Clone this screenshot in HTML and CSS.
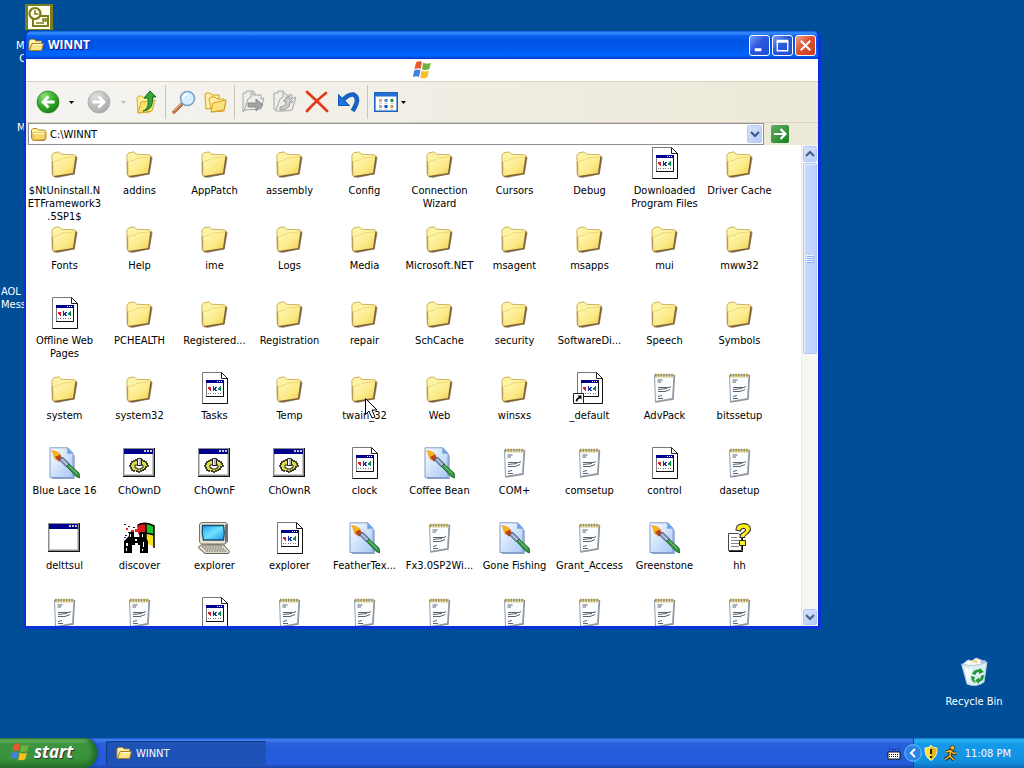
FILE: index.html
```html
<!DOCTYPE html>
<html lang="en">
<head>
<meta charset="utf-8">
<title>WINNT</title>
<link rel="stylesheet" href="styles.css">
</head>
<body>
<svg class="defs" aria-hidden="true">
  <defs>
    <linearGradient id="gFolder" x1="0" y1="0" x2="1" y2="1"><stop offset="0" stop-color="#fffac0"/><stop offset=".6" stop-color="#fbe984"/><stop offset="1" stop-color="#eccb50"/></linearGradient>
    <linearGradient id="gPage" x1="0" y1="0" x2="1" y2="1"><stop offset="0" stop-color="#fdfeff"/><stop offset="1" stop-color="#a5c8f5"/></linearGradient>
    <radialGradient id="gGreen" cx=".35" cy=".25" r=".9"><stop offset="0" stop-color="#8ede76"/><stop offset=".5" stop-color="#35a92c"/><stop offset="1" stop-color="#12720f"/></radialGradient>
    <radialGradient id="gGrey" cx=".35" cy=".25" r=".9"><stop offset="0" stop-color="#dedede"/><stop offset="1" stop-color="#a2a2a2"/></radialGradient>
    <linearGradient id="gScreen" x1="0" y1="0" x2="1" y2="1"><stop offset="0" stop-color="#1aa0f0"/><stop offset=".5" stop-color="#6fe0ff"/><stop offset="1" stop-color="#1c9be8"/></linearGradient>
    <symbol id="folder" viewBox="0.500 0 33 33">
      <path d="M8 30.500 26 27.500 30 10l1 1-3 17-18 4z" fill="#6b5a52" opacity=".65"/>
      <path d="M4.500 8.500 6.500 6 12 5 14.500 7.500 28 8 29.500 9.500 26.500 27.500 6.500 30.500 5 28z" fill="#fdf3a4" stroke="#cbb05c"/>
      <path d="M5.500 15.500 13.500 13 15 11.500 29 10 26.500 27 7 30z" fill="url(#gFolder)" stroke="#e5c34e" stroke-width=".6"/>
      <path d="M29.500 10 27 27.500 7 30.600" fill="none" stroke="#7d5e35" stroke-width="1.500"/>
      <path d="M5 15v13l1.500 2.500" fill="none" stroke="#b1935b"/>
    </symbol>
    <symbol id="folderopen" viewBox="0 0 16 16">
      <path d="M1 13 1 4 2.500 2.500h4L8 4h5.500v3" fill="#fff3a2" stroke="#b98c2c"/>
      <path d="M1.500 13.500 4 6.500h11.500L13.500 13.500z" fill="#fbe58a" stroke="#a87d24"/>
      <path d="M5 7.500h9" stroke="#fffde0"/>
    </symbol>
    <symbol id="settings" viewBox="0 0 32 32">
      <path d="M4.500 .5h18.500l6.500 6V31.500H4.500z" fill="#fff" stroke="#777"/>
      <path d="M29.500 6v25.500H4.500" fill="none" stroke="#111"/>
      <path d="M23.500 .5v6h6z" fill="#fff" stroke="#222"/>
      <path d="M8.500 8.500h17v16h-17z" fill="#fff" stroke="#808080"/>
      <path d="M8 8h18v3H8z" fill="#00008a"/><path d="M19 9h1v1h-1zM21 9h1v1h-1zM23 9h1v1h-1z" fill="#fff"/>
      <path d="M25.500 8v16.500H8" fill="none" stroke="#111"/>
      <path d="M11 15h2v4h-1v-1h-1zM10 15h1v2h-1z" fill="#d2202e"/>
      <path d="M15 14h1v2h1v-1h2v1h-1v2h1v1h-2v-1h-1v1h-1z" fill="#1a2ea8"/>
      <path d="M22 14h1v5h-1v-1h-2v-2h1v-1h1z" fill="#0b8f4c"/>
      <path d="M10 21.500h3M15 21.500h3M20 21.500h3" stroke="#777" stroke-dasharray="1 1"/>
    </symbol>
    <symbol id="notepad" viewBox="0 0 32 32">
      <path d="M7.500 28.500 8 30 25 27 26.500 3" fill="none" stroke="#666" stroke-width="1.500" opacity=".7"/>
      <path d="M6.500 3h19.500l-1.500 23.500L7.500 29.500z" fill="#fcfdff" stroke="#8494a5" stroke-width=".9"/>
      <path d="M7 3.300h19" stroke="#a8913b" stroke-width="3.200" stroke-dasharray="1.500 1.200"/>
      <path d="M7 5.200h18.500" stroke="#e3d9a5"/>
      <path d="M9.500 8h5M9.500 10h3.500M10 15.500h11l2-1M10 17.500l9-1M10 19.500h7l5-2M10 24.500l4-1M10 26.500h5" fill="none" stroke="#46525e" stroke-width=".9"/>
    </symbol>
    <symbol id="paint" viewBox="0 0 32 32">
      <path d="M4 31.500h22V8" fill="none" stroke="#5c7baf" stroke-width="1.500" opacity=".7"/>
      <path d="M2 .8h18l5 5.500V30.500H2z" fill="url(#gPage)" stroke="#7f9ccb"/>
      <path d="M19.500 1v5.500H25z" fill="#5ea4ef" stroke="#8bb0e2"/>
      <path d="M3.500 3.500c3 0 7 1 9.500 5l-5 4.500C5 10 6 7 3.500 3.500z" fill="#f6b31c" stroke="#e09a18" stroke-width=".5"/>
      <path d="m7 10 5-2.500 3 5.500-4.500 1.500z" fill="#b8461a"/>
      <path d="m11.500 13 3-3 7 7-3 3z" fill="#8697bd" stroke="#384875" stroke-width=".8"/>
      <path d="m13.500 12 6 6" stroke="#e6eeff"/>
      <path d="m18.500 19.500 2.500-2.500 10 9 1 5-4-1.500z" fill="#319443" stroke="#185a2a" stroke-width=".8"/>
      <path d="m20.500 18.500 9 8.500" stroke="#8bd183"/>
    </symbol>
    <symbol id="appwin" viewBox="0 0 32 32">
      <path d="M0 1h32v29H0z" fill="#111"/><path d="M0 1h31v28H0z" fill="#8c8c8c"/><path d="M1 2h29v26H1z" fill="#c8c8c8"/>
      <path d="M2 7h27v20H2z" fill="#fff"/><path d="M1 2h29v5H1z" fill="#00008c"/>
      <path d="M21 3h2v2h-2zM24 3h2v2h-2zM27 3h2v2h-2z" fill="#c8c8c8"/>
    </symbol>
    <symbol id="gearwin" viewBox="0 0 32 32">
      <use href="#appwin"/>
      <path d="M8 15h2v-1h2v-1h8v1h2v1h2v2h1v2h-2v2h-1v2h-2v1h-3v1h-3v-1h-3v-1h-2v-2H8v-2H7v-2h1z" fill="#dede4c" stroke="#111" stroke-width="1.600" stroke-dasharray="2 1"/>
      <path d="M12 18h8v3h-2v1h-4v-1h-2z" fill="#fff" stroke="#222"/>
      <path d="M14.500 11.500h4v7h-4z" fill="#b8b8b8" stroke="#222"/><path d="M15.500 12v6" stroke="#fff"/>
    </symbol>
    <symbol id="binoculars" viewBox="0 0 32 32">
      <path d="M14 3q4-3 9-2v10q-4-1-8 1z" fill="#e01818"/><path d="M23 1q5 .5 8 3v9q-4-2-8-2z" fill="#1cc42a"/>
      <path d="M23 12q5 0 8 2v11q-4-3-8-3z" fill="#f2e31e"/><path d="M16 12q3-1 7-.5V20h-7z" fill="#2446d8"/>
      <path d="M15 3q8-4 16 1v22M23 1v19M16 12q8-2 15 1" fill="none" stroke="#000" stroke-width="1.500"/>
      <path d="M1 2h2v1H1zM5 4h2v1H5zM10 5h2v1h-2zM2 13h2v1H2zM5 10h2v1H5z" fill="#111"/>
      <path d="M3 6h2v2H3zM8 8h3v2H8zM12 7h3v3h-3z" fill="#e02828"/><path d="M1 15h2v1H1z" fill="#2446d8"/>
      <path d="M6 10h5v5h6v-5h5v5l3 4v12h-8v-8h-2v-2h-3v2H9v8H1V19l5-5z" fill="#000"/>
      <path d="M7 12h1v3H7zM19 12h1v3h-1zM3 21h2v3H3zM3 26h1v3H3zM20 20h1v5h-1zM19 27h1v2h-1zM12 17h2v2h-2z" fill="#fff"/>
    </symbol>
    <symbol id="computer" viewBox="0 0 32 32">
      <path d="M1.500 2 4 .5h24L29.500 2v18L27 22H3.500l-2-2z" fill="#e6e2cf" stroke="#77756a"/>
      <path d="M27 3 29 2v17l-2 2z" fill="#6e6c66"/>
      <path d="M4.500 3.500h21q1.500 7 0 14.500h-20q-2-7-1-14.500z" fill="url(#gScreen)" stroke="#174d73" stroke-width="1.300"/>
      <path d="M9 22h14l2 3H7z" fill="#9c9a8e"/>
      <path d="m1 24.500 2-1.500h23l5.500 6.500-1 2H7L.5 26z" fill="#dedac8" stroke="#65635a"/>
      <path d="M4 25h20M6 27h20M8 29h21" stroke="#6c6a62" stroke-width="1.100" stroke-dasharray="1.800 .8"/>
    </symbol>
    <symbol id="helpdoc" viewBox="0 0 32 32">
      <path d="M5.500 11.500h10l3 3V28.500H5.500z" fill="#fff" stroke="#444"/><path d="M19.500 15v14.500H6" fill="none" stroke="#000"/>
      <path d="M8 15.500h6M8 18.500h8M8 21.500h8M8 24.500h8" stroke="#888"/>
      <path d="M13 8c-1-8 14.500-8.500 14.500-1 0 5-6 5-6 8.500h-4.500c0-6 5.500-4.500 5.500-7.500 0-2.500-5-2-5 1z" fill="#ffef20" stroke="#333" stroke-width="1.100"/>
      <path d="M16.500 18.500h6v5h-6z" fill="#ffef20" stroke="#222"/>
    </symbol>
    <symbol id="shortcut" viewBox="0 0 32 32">
      <use href="#settings"/>
      <path d="M.5 21.500h10v10H.5z" fill="#fff" stroke="#222"/>
      <path d="M3.500 29.500q0-3 3.500-4" fill="none" stroke="#000" stroke-width="1.600"/><path d="M4.500 23.500H8.500V27.500z"/>
    </symbol>
    <symbol id="flag" viewBox="0 0 20 20">
      <path d="M4 2.500Q7 .5 10 2L8.700 8.800Q5.500 7.500 2.500 9.300z" fill="#e9572b"/>
      <path d="M11.200 2.700Q15 4.500 19 2.700L17.300 9Q13.500 11 10 9.200z" fill="#6db33a"/>
      <path d="M2.200 10.500Q5.500 8.800 8.500 10.200L7 17Q4 15.500.8 17.200z" fill="#4182dc"/>
      <path d="M9.700 10.500q3.500 1.700 7.300.200L15.300 17.300q-3.500 2-7 .2z" fill="#f6be27"/>
    </symbol>
  </defs>
</svg>

<div class="screen">
  <main class="desktop">
    <div class="shortcut outlook">
      <svg class="outlook-icon" viewBox="0 0 28 26" aria-hidden="true"><path d="M0 0h28v26H0z" fill="#7d7c1e"/><path d="M3 2h22v23H3z" fill="#fffff0"/><path d="M8 12h15v10H8z" fill="#fffff0" stroke="#7d7c1e" stroke-width="2"/><circle cx="10" cy="9.500" r="5.500" fill="#fffff0" stroke="#7d7c1e" stroke-width="2.200"/><path d="M10 6v4h3.500M18 15h3v2h-3zM11 19h8" fill="none" stroke="#7d7c1e" stroke-width="1.600"/></svg>
    </div>
    <span class="desk-label first">M<br>&nbsp;C</span>
    <span class="desk-label second">M</span>
    <span class="desk-label third">AOL<br>Mess</span>

    <a class="recycle" href="#">
      <svg viewBox="0 0 32 32" aria-hidden="true"><path d="m5 7 5-4 4 1 4-3 5 2 5 3-3 8H8z" fill="#f9f7ee" stroke="#c6cfe2"/><path d="m14 5 4-3 2 4z" fill="#f1d287"/><path d="m22 4 5-1 2 4-5 2z" fill="#b3c5f5"/><path d="M3.500 7q12 4 25.500-2l-3 20q-8 6-17 2z" fill="#dceef2" stroke="#a9c9dc"/><path d="m8 11 3 14M13 11l-2 8" stroke="#fff" stroke-width="3" opacity=".8"/><path d="M14 17q2-5 7-4.500l1-1.500 4 4-5 2v-2q-3 0-3.500 3zM26 18q0 6-5 7v2l-4-3.500 4-3v2q2-1 2-4zM13 19l4 1-1 3 2 3q-4-1-4.500-4z" fill="#1f9a34"/></svg>
      <span>Recycle Bin</span>
    </a>

    <section class="window" aria-label="WINNT">
      <header class="titlebar">
        <svg class="small-icon" aria-hidden="true"><use href="#folderopen"/></svg>
        <h1>WINNT</h1>
        <div class="caption-buttons">
          <button class="cap" aria-label="Minimize"><svg viewBox="0 0 20 20"><path d="M5 13h7v3H5z" fill="#fff"/></svg></button>
          <button class="cap" aria-label="Maximize"><svg viewBox="0 0 20 20"><path d="M4.500 5.500h11v10h-11z" fill="none" stroke="#fff" stroke-width="1.400"/><path d="M4 4h12v3H4z" fill="#fff"/></svg></button>
          <button class="cap close" aria-label="Close"><svg viewBox="0 0 20 20"><path d="m5 5 10 10M15 5 5 15" stroke="#fff" stroke-width="2.200"/></svg></button>
        </div>
      </header>
      <div class="menubar"><svg class="throbber" aria-hidden="true"><use href="#flag"/></svg></div>
      <div class="toolbar" role="toolbar">
        <button class="tool back" aria-label="Back"><svg viewBox="0 0 24 24"><circle cx="12" cy="12" r="11" fill="url(#gGreen)" stroke="#348a2e" stroke-width=".8"/><path d="M18.500 12H7m5.500-5.500L7 12l5.500 5.500" fill="none" stroke="#fff" stroke-width="2.800"/></svg></button>
        <button class="drop" aria-label="Back history"><svg viewBox="0 0 5 3"><path d="M0 0h5L2.500 3z"/></svg></button>
        <button class="tool forward" aria-label="Forward"><svg viewBox="0 0 24 24"><circle cx="12" cy="12" r="11" fill="url(#gGrey)" stroke="#aaa" stroke-width=".8"/><path d="M5.500 12H17m-5.500-5.500L17 12l-5.500 5.500" fill="none" stroke="#fff" stroke-width="2.800"/></svg></button>
        <button class="drop off" aria-label="Forward history"><svg viewBox="0 0 5 3"><path d="M0 0h5L2.500 3z" fill="#bbb"/></svg></button>
        <button class="tool up" aria-label="Up"><svg viewBox="0 0 24 24"><path d="m2 8 2-2h3l2 2h8l-2 14-12 1z" fill="#fff3a0" stroke="#d0a92c"/><path d="m3 23 3-11 14-2-3 11z" fill="#fae46f" stroke="#d0a92c"/><path d="M8 21c5-2 5.500-6 5-13H9l6-7 6 6h-3.500c.5 8-1.500 13-9.500 14z" fill="#37a537" stroke="#136d1c"/></svg></button>
        <span class="sep"></span>
        <button class="tool search" aria-label="Search"><svg viewBox="0 0 24 24"><path d="m2 22 8-8" stroke="#b96f4c" stroke-width="3.500" stroke-linecap="round"/><path d="m2 21 7-7" stroke="#f0b797"/><circle cx="15.500" cy="8.500" r="7" fill="#d6f0fd" stroke="#7b9fca" stroke-width="1.600"/><path d="M11 8q1-4 5-4" fill="none" stroke="#fff" stroke-width="2"/></svg></button>
        <button class="tool folders" aria-label="Folders"><svg viewBox="0 0 24 24"><path d="m1 5 1-2h4l2 2h7v4l-2 9-11 1z" fill="#fff0a0" stroke="#d79b2a"/><path d="m5 9 2-2h4l2 2h7v3l2-1-2 10-12 1z" fill="#fff0a0" stroke="#d79b2a"/><path d="m7 22 2-9 13-3-2 10z" fill="#fbe27b" stroke="#d79b2a"/></svg></button>
        <span class="sep"></span>
        <button class="tool move" aria-label="Move to"><svg viewBox="0 0 24 24"><path d="M2 3h3V1h7l3 4h5v4l3-1-3 11-16 1-2 2z" fill="#ededeb" stroke="#a5a5a5"/><path d="m3 21 4-12 3-2V2M12 1v4h3" fill="none" stroke="#a5a5a5"/><path d="M7 13h8V9l7 6-7 6v-4H7z" fill="#a2a2a2" stroke="#8c8c8c"/></svg></button>
        <button class="tool copy" aria-label="Copy to"><svg viewBox="0 0 24 24"><path d="M1 3h4V1h5l3 4h6v4l4-2-4 13-7 1H3L1 19z" fill="#ededeb" stroke="#a5a5a5"/><path d="m3 20 4-11 3-2V2M12 8l4-2 3 3" fill="none" stroke="#a5a5a5"/><path d="M7 17q6 0 6-6h-3l5-4 5 5h-3q0 8-10 8z" fill="#cdcdcd" stroke="#999"/></svg></button>
        <button class="tool delete" aria-label="Delete"><svg viewBox="0 0 24 24"><path d="M2 2q9 8 20 19M21 3Q12 10 2 21" fill="none" stroke="#e23b18" stroke-width="2.800" stroke-linecap="round"/></svg></button>
        <button class="tool undo" aria-label="Undo"><svg viewBox="0 0 24 24"><path d="M5 11Q11 4 16.500 4.500 24 8 15.500 21" fill="none" stroke="#1763c4" stroke-width="4.600"/><path d="M1.500 4.500v11h11z" fill="#1e74dc" stroke="#1258b4"/></svg></button>
        <span class="sep"></span>
        <button class="tool views" aria-label="Views"><svg viewBox="0 0 24 20"><path d="M.8.800h22.400v18.400H.8z" fill="#fff" stroke="#1c60bc" stroke-width="1.600"/><path d="M1 1h22v3.500H1z" fill="#236fd4"/><path d="M5 7h3v3H5z" fill="#c4ac97"/><path d="M10.500 7h3v3h-3z" fill="#5189ba"/><path d="M16.500 7h3v3h-3z" fill="#278c4b"/><path d="M5 13h3v3H5z" fill="#a6aba5"/><path d="M10.500 13h3v3h-3z" fill="#0f51bc"/><path d="M16.500 13h3v3h-3z" fill="#c39d4a"/><path d="M5 11.500h3M10.500 11.500h3M16.500 11.500h3M5 17.500h3M10.500 17.500h3M16.500 17.500h3" stroke="#bbb" stroke-width=".8"/></svg></button>
        <button class="drop" aria-label="View options"><svg viewBox="0 0 5 3"><path d="M0 0h5L2.500 3z"/></svg></button>
      </div>
      <form class="addressbar">
        <div class="address">
          <svg class="small-icon" viewBox="0 0 16 16" aria-hidden="true"><path d="M.5 12V4L2 2.500h4L7.500 4h6l1.500 2v7L13 14.500H2z" fill="#fff09a" stroke="#b18328"/><path d="M2 14V7h12v6.500z" fill="#f7d768" stroke="#cfa33a"/><path d="M2.500 7.500h11" stroke="#fffbd0"/></svg>
          <input type="text" value="C:\WINNT" aria-label="Address">
          <button class="combo" type="button" aria-label="Show addresses"><svg viewBox="0 0 10 8"><path d="m1 2 4 4 4-4" fill="none" stroke="#3f5a8c" stroke-width="2.200"/></svg></button>
        </div>
        <button class="go" type="button" aria-label="Go"><svg viewBox="0 0 18 18"><path d="M3 9h11M9.500 4l5 5-5 5" fill="none" stroke="#fff" stroke-width="2.200"/></svg></button>
      </form>
      <div class="client">
        <ul class="files">
          <li><a href="#"><svg><use href="#folder"/></svg>$NtUninstall.N<br>ETFramework3<br>.5SP1$</a></li>
          <li><a href="#"><svg><use href="#folder"/></svg>addins</a></li>
          <li><a href="#"><svg><use href="#folder"/></svg>AppPatch</a></li>
          <li><a href="#"><svg><use href="#folder"/></svg>assembly</a></li>
          <li><a href="#"><svg><use href="#folder"/></svg>Config</a></li>
          <li><a href="#"><svg><use href="#folder"/></svg>Connection<br>Wizard</a></li>
          <li><a href="#"><svg><use href="#folder"/></svg>Cursors</a></li>
          <li><a href="#"><svg><use href="#folder"/></svg>Debug</a></li>
          <li><a href="#"><svg><use href="#settings"/></svg>Downloaded<br>Program Files</a></li>
          <li><a href="#"><svg><use href="#folder"/></svg>Driver Cache</a></li>
          <li><a href="#"><svg><use href="#folder"/></svg>Fonts</a></li>
          <li><a href="#"><svg><use href="#folder"/></svg>Help</a></li>
          <li><a href="#"><svg><use href="#folder"/></svg>ime</a></li>
          <li><a href="#"><svg><use href="#folder"/></svg>Logs</a></li>
          <li><a href="#"><svg><use href="#folder"/></svg>Media</a></li>
          <li><a href="#"><svg><use href="#folder"/></svg>Microsoft.NET</a></li>
          <li><a href="#"><svg><use href="#folder"/></svg>msagent</a></li>
          <li><a href="#"><svg><use href="#folder"/></svg>msapps</a></li>
          <li><a href="#"><svg><use href="#folder"/></svg>mui</a></li>
          <li><a href="#"><svg><use href="#folder"/></svg>mww32</a></li>
          <li><a href="#"><svg><use href="#settings"/></svg>Offline Web<br>Pages</a></li>
          <li><a href="#"><svg><use href="#folder"/></svg>PCHEALTH</a></li>
          <li><a href="#"><svg><use href="#folder"/></svg>Registered...</a></li>
          <li><a href="#"><svg><use href="#folder"/></svg>Registration</a></li>
          <li><a href="#"><svg><use href="#folder"/></svg>repair</a></li>
          <li><a href="#"><svg><use href="#folder"/></svg>SchCache</a></li>
          <li><a href="#"><svg><use href="#folder"/></svg>security</a></li>
          <li><a href="#"><svg><use href="#folder"/></svg>SoftwareDi...</a></li>
          <li><a href="#"><svg><use href="#folder"/></svg>Speech</a></li>
          <li><a href="#"><svg><use href="#folder"/></svg>Symbols</a></li>
          <li><a href="#"><svg><use href="#folder"/></svg>system</a></li>
          <li><a href="#"><svg><use href="#folder"/></svg>system32</a></li>
          <li><a href="#"><svg><use href="#settings"/></svg>Tasks</a></li>
          <li><a href="#"><svg><use href="#folder"/></svg>Temp</a></li>
          <li><a href="#"><svg><use href="#folder"/></svg>twain_32</a></li>
          <li><a href="#"><svg><use href="#folder"/></svg>Web</a></li>
          <li><a href="#"><svg><use href="#folder"/></svg>winsxs</a></li>
          <li><a href="#"><svg><use href="#shortcut"/></svg>_default</a></li>
          <li><a href="#"><svg><use href="#notepad"/></svg>AdvPack</a></li>
          <li><a href="#"><svg><use href="#notepad"/></svg>bitssetup</a></li>
          <li><a href="#"><svg><use href="#paint"/></svg>Blue Lace 16</a></li>
          <li><a href="#"><svg><use href="#gearwin"/></svg>ChOwnD</a></li>
          <li><a href="#"><svg><use href="#gearwin"/></svg>ChOwnF</a></li>
          <li><a href="#"><svg><use href="#gearwin"/></svg>ChOwnR</a></li>
          <li><a href="#"><svg><use href="#settings"/></svg>clock</a></li>
          <li><a href="#"><svg><use href="#paint"/></svg>Coffee Bean</a></li>
          <li><a href="#"><svg><use href="#notepad"/></svg>COM+</a></li>
          <li><a href="#"><svg><use href="#notepad"/></svg>comsetup</a></li>
          <li><a href="#"><svg><use href="#settings"/></svg>control</a></li>
          <li><a href="#"><svg><use href="#notepad"/></svg>dasetup</a></li>
          <li><a href="#"><svg><use href="#appwin"/></svg>delttsul</a></li>
          <li><a href="#"><svg><use href="#binoculars"/></svg>discover</a></li>
          <li><a href="#"><svg><use href="#computer"/></svg>explorer</a></li>
          <li><a href="#"><svg><use href="#settings"/></svg>explorer</a></li>
          <li><a href="#"><svg><use href="#paint"/></svg>FeatherTex...</a></li>
          <li><a href="#"><svg><use href="#notepad"/></svg>Fx3.0SP2Wi...</a></li>
          <li><a href="#"><svg><use href="#paint"/></svg>Gone Fishing</a></li>
          <li><a href="#"><svg><use href="#notepad"/></svg>Grant_Access</a></li>
          <li><a href="#"><svg><use href="#paint"/></svg>Greenstone</a></li>
          <li><a href="#"><svg><use href="#helpdoc"/></svg>hh</a></li>
          <li><a href="#" aria-label="File"><svg><use href="#notepad"/></svg></a></li>
          <li><a href="#" aria-label="File"><svg><use href="#notepad"/></svg></a></li>
          <li><a href="#" aria-label="File"><svg><use href="#settings"/></svg></a></li>
          <li><a href="#" aria-label="File"><svg><use href="#notepad"/></svg></a></li>
          <li><a href="#" aria-label="File"><svg><use href="#notepad"/></svg></a></li>
          <li><a href="#" aria-label="File"><svg><use href="#notepad"/></svg></a></li>
          <li><a href="#" aria-label="File"><svg><use href="#notepad"/></svg></a></li>
          <li><a href="#" aria-label="File"><svg><use href="#notepad"/></svg></a></li>
          <li><a href="#" aria-label="File"><svg><use href="#notepad"/></svg></a></li>
          <li><a href="#" aria-label="File"><svg><use href="#notepad"/></svg></a></li>
        </ul>
        <div class="scrollbar">
          <button class="scroll-btn" aria-label="Scroll up"><svg viewBox="0 0 10 8"><path d="m1 6 4-4 4 4" fill="none" stroke="#4d6185" stroke-width="2.200"/></svg></button>
          <div class="track"><div class="thumb"><svg viewBox="0 0 8 8"><path d="M0 .5h7M0 2.500h7M0 4.500h7M0 6.500h7" stroke="#eef4fe"/><path d="M1 1.500h7M1 3.500h7M1 5.500h7M1 7.500h7" stroke="#8cb0f8"/></svg></div></div>
          <button class="scroll-btn" aria-label="Scroll down"><svg viewBox="0 0 10 8"><path d="m1 2 4 4 4-4" fill="none" stroke="#4d6185" stroke-width="2.200"/></svg></button>
        </div>
      </div>
    </section>
    <svg class="pointer" viewBox="0 0 13 21" aria-hidden="true"><path d="M.5.500v16l3.500-3.500 3 7 3-1-3-7h5z" fill="#fff" stroke="#000"/></svg>
  </main>

  <footer class="taskbar">
    <button class="start"><svg aria-hidden="true"><use href="#flag"/></svg>start</button>
    <button class="task"><svg class="small-icon" aria-hidden="true"><use href="#folderopen"/></svg>WINNT</button>
    <svg class="keyboard" viewBox="0 0 14 13" aria-hidden="true"><path d="M2 1h1v1H2zM5 2h1v1H5zM8 2h1v1H8zM11 1h1v1h-1z" fill="#102"/><path d="M1 5h12v7H1z" fill="#fff" stroke="#111"/><path d="M2 7.500h10M2 9.500h10" stroke="#111" stroke-dasharray="1 1"/></svg>
    <div class="tray">
      <button class="chevron" aria-label="Show hidden icons"><svg viewBox="0 0 18 18"><circle cx="9" cy="9" r="8.300" fill="#2b83e6" stroke="#72bdf8"/><path d="m11 5-4 4 4 4" fill="none" stroke="#fff" stroke-width="2"/></svg></button>
      <svg class="small-icon" viewBox="0 0 16 16" aria-hidden="true"><path d="M2 3q4 0 6-2.500Q10 3 14 3q.500 9-6 12.500Q1.500 12 2 3z" fill="#ffdf33" stroke="#f2edc8"/><path d="M8 1q2 2.500 5.500 2.500Q14 11 8 15z" fill="#e5b51e"/><path d="M8 4v5M8 11v2" stroke="#222" stroke-width="2"/></svg>
      <svg class="small-icon aim" viewBox="0 0 16 16" aria-hidden="true"><path d="M3 7 7.500 5.500 10.500 8.500l3-.5M7.500 6 7 11l4 4M7 11l-5 3.500" fill="none" stroke="#3d2a10" stroke-width="3.400"/><circle cx="9.500" cy="2.800" r="2.300" fill="#f6bd34" stroke="#3d2a10" stroke-width=".8"/><path d="M3 7 7.500 5.500 10.500 8.500l3-.5M7.500 6 7 11l4 4M7 11l-5 3.500" fill="none" stroke="#f6bd34" stroke-width="1.500"/></svg>
      <time>11:08 PM</time>
    </div>
  </footer>
</div>
</body>
</html>
```
FILE: styles.css
```css
* { box-sizing: border-box; }

body {
  margin: 0;
  font: 11px/13px Tahoma, "DejaVu Sans Condensed", sans-serif;
  color: #000;
}

button, input { font: inherit; color: inherit; margin: 0; padding: 0; border: 0; background: none; }
a { color: inherit; text-decoration: none; }
svg { display: block; flex: none; }
.defs { position: absolute; width: 0; height: 0; }
.small-icon { width: 16px; height: 16px; }

.screen { display: flex; flex-direction: column; height: 100vh; min-height: 400px; overflow: hidden; background: #004e98; }
.desktop { position: relative; flex: 1; min-height: 0; }

.outlook { position: absolute; left: 25px; top: 4px; }
.outlook-icon { width: 28px; height: 26px; }
.desk-label { position: absolute; color: #fff; white-space: nowrap; }
.desk-label.first { left: 16px; top: 39px; }
.desk-label.second { left: 17px; top: 121px; }
.desk-label.third { left: 1px; top: 285px; }

.recycle { position: absolute; right: 12px; bottom: 30px; width: 76px; display: flex; flex-direction: column; align-items: center; gap: 6px; color: #fff; }
.recycle svg { width: 32px; height: 32px; }

.window {
  position: absolute; inset: 31px 203px 109px 24px;
  display: flex; flex-direction: column;
  border: solid #0831d9; border-width: 0 3px 3px 2px;
  border-radius: 7px 7px 0 0; background: #0831d9; overflow: hidden;
}
.titlebar {
  display: flex; align-items: center; gap: 4px; flex: none; height: 28px; padding: 0 2px; color: #fff;
  background: linear-gradient(#0a5be8, #3c91ff 2px, #0860ee 5px, #0054e3 10px, #0057ea 16px, #0066ff 24px, #003fce);
}
.titlebar h1 { flex: 1; margin: 0; font: bold 12px/16px "Open Sans", sans-serif; text-shadow: 1px 1px #0f1089; }
.caption-buttons { display: flex; gap: 2px; }
.cap { width: 21px; height: 21px; border: 1px solid #fff; border-radius: 3px; background: linear-gradient(135deg, #7a9df5, #2b58dc 45%, #1f4ed0); }
.cap svg { width: 19px; height: 19px; }
.cap.close { background: linear-gradient(135deg, #f0a088, #dd5231 45%, #c93c1b); }

.menubar { display: flex; justify-content: center; align-items: center; flex: none; height: 23px; background: #fff; border-bottom: 1px solid #d8d2bd; }
.throbber { width: 20px; height: 20px; }

.toolbar { display: flex; align-items: center; flex: none; height: 41px; padding-left: 10px; background: linear-gradient(90deg, #f5f4f1, #ece9d8); border-bottom: 1px solid #d8d2bd; }
.tool { width: 24px; height: 24px; }
.tool svg { width: 24px; height: 24px; }
.drop { width: 20px; height: 24px; display: grid; place-items: center; }
.drop svg { width: 5px; height: 3px; }
.back { margin-right: 1px; }
.forward { margin: 0 2px 0 6px; }
.up { margin-left: 2px; }
.sep { width: 1px; height: 34px; margin: 0 6px; background: #c9c6b9; }
.folders, .copy, .delete, .undo { margin-left: 8px; }
.views + .drop { width: 10px; }
.views svg { height: 20px; margin: 2px 0; }

.addressbar { display: flex; align-items: center; gap: 7px; flex: none; height: 22px; padding-left: 2px; background: #ece9d8; }
.address { display: flex; align-items: center; gap: 3px; flex: 1; height: 22px; padding: 0 1px 0 2px; background: #fff; border: 1px solid #8e9096; }
.address input { flex: 1; min-width: 0; outline: 0; }
.combo, .scroll-btn { display: grid; place-items: center; border-radius: 2px; background: linear-gradient(135deg, #d6e2fd, #b9ccf7); border: 1px solid #b7caf5; }
.combo { width: 15px; height: 18px; }
.combo svg, .scroll-btn svg { width: 10px; height: 8px; }
.go { width: 18px; height: 18px; margin-right: 29px; border-radius: 2px; background: linear-gradient(135deg, #62ae61, #18801f); }
.go svg { width: 18px; height: 18px; }

.client { display: flex; flex: 1; min-height: 0; background: #fff; }
.files {
  flex: 1; min-width: 0; margin: 0; padding: 2px 0 0 1px; list-style: none; overflow: hidden;
  display: grid; grid-template-columns: repeat(auto-fill, 75px); grid-auto-rows: 75px;
}
.files a { display: block; text-align: center; white-space: nowrap; }
.files svg { width: 32px; height: 32px; margin: 0 22px 5px 21px; }
.scrollbar { display: flex; flex-direction: column; gap: 1px; width: 17px; padding: 1px; background: #f7f6f2; border-left: 1px solid #eeede5; }
.scroll-btn { flex: none; height: 16px; }
.track { flex: 1; min-height: 0; }
.thumb { display: grid; place-items: center; height: 43%; border: 1px solid #b0c6f5; border-radius: 2px; background: linear-gradient(90deg, #cbdafe, #bccffa); box-shadow: inset 1px 1px #e8effe; }
.thumb svg { width: 8px; height: 8px; }

.pointer { position: absolute; left: 365px; top: 398px; width: 13px; height: 21px; }

.taskbar {
  display: flex; align-items: center; flex: none; height: 30px; color: #fff;
  background: linear-gradient(#1f55c8, #4283f3 2px, #2a62dc 5px, #245bda 12px, #245cdc 26px, #1b44a8);
}
.start {
  display: flex; align-items: center; gap: 4px; width: 97px; height: 30px; padding: 0 0 2px 10px;
  border-radius: 0 12px 12px 0 / 0 15px 15px 0;
  background: linear-gradient(#2e7d2e, #62b362 2px, #3f9440 6px, #3a933a 20px, #2b7530);
  box-shadow: inset -4px -1px 5px #1f6a24, 1px 0 3px #173f94;
  font: italic bold 17px/24px "Open Sans", sans-serif; text-shadow: 1px 1px 1px #333;
}
.start svg { width: 20px; height: 20px; }
.task {
  display: flex; align-items: center; gap: 4px; width: 160px; height: 25px; margin-left: 9px; padding-left: 10px;
  border-radius: 2px; background: #1e52b7; box-shadow: inset 1px 1px 1px #123a8c;
}
.keyboard { width: 14px; height: 13px; margin: 0 12px 0 auto; }
.tray {
  display: flex; align-items: center; gap: 4px; height: 30px; padding-right: 13px;
  background: linear-gradient(#0d7bd0, #2bb2f2 2px, #139ae8 6px, #1290e0 24px, #0c6db8);
  border-left: 1px solid #0f3f9c;
}
.chevron { width: 18px; height: 18px; margin: 0 -3px 0 -10px; }
.chevron svg { width: 18px; height: 18px; }
.tray time { margin-left: 2px; }
```
